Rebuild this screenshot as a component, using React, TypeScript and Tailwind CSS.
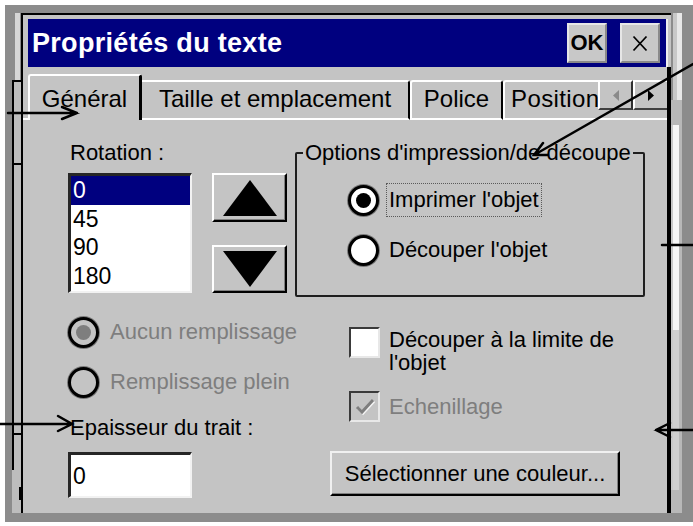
import React from "react";

function RaisedTri({ dir }: { dir: "up" | "down" }) {
  return (
    <svg width="54" height="36" viewBox="0 0 54 36">
      {dir === "up" ? (
        <polygon points="27,0 54,36 0,36" fill="#000" />
      ) : (
        <polygon points="0,0 54,0 27,36" fill="#000" />
      )}
    </svg>
  );
}

function Radio({ checked, disabled }: { checked?: boolean; disabled?: boolean }) {
  return (
    <div
      className={
        "flex h-[31px] w-[31px] shrink-0 items-center justify-center rounded-full border-[3px] border-black shadow-[0_0_0_1px_#7a7a7a] " +
        (disabled ? "bg-[#c4c4c4]" : "bg-white")
      }
    >
      {checked && (
        <div
          className={
            "h-[15px] w-[15px] rounded-full " + (disabled ? "bg-[#7e7e7e]" : "bg-black")
          }
        />
      )}
    </div>
  );
}

export default function App() {
  return (
    <div className="relative h-[526px] w-[693px] overflow-hidden bg-white pl-[5px] pt-[5px] font-['Liberation_Sans',Arial,sans-serif] text-black">
      <div className="flex h-[517px] w-[688px] bg-[#8c8c8c] pb-[9px] pt-[8px]">
        {/* left background strip */}
        <div className="flex w-[16px] flex-col pl-[7px]">
          <div className="flex h-[67px] pl-[3px]">
            <div className="w-[5px] bg-[#d6d6d6]" />
          </div>
          <div className="flex flex-1 flex-col bg-[#bdbdbd]">
            <div className="h-[83px] border-l-2 border-t-2 border-black" />
            <div className="h-[270px] border-l-2 border-t-2 border-black" />
            <div className="h-[37px] border-l-2 border-t-2 border-black" />
            <div className="flex flex-1 justify-end">
              <div className="mt-[17px] h-[13px] w-[2px] bg-black" />
            </div>
          </div>
        </div>

        {/* dialog */}
        <div className="flex h-[500px] w-[650px] flex-col border-l-2 border-t-2 border-black bg-[#c4c4c4]">
          {/* title row */}
          <div className="flex h-[52px] pl-[5px] pt-[4px]">
            <div className="flex h-[48px] w-[638px] items-center bg-[#00007f] pl-[4px]">
              <span className="whitespace-nowrap text-[27px] font-bold leading-[30px] tracking-[0.3px] text-white">
                Propriétés du texte
              </span>
              <div className="ml-auto mr-[6px] flex gap-[13px]">
                <div className="flex h-[40px] w-[40px] items-center justify-center border-b-2 border-l-2 border-r-2 border-t-2 border-b-[#8a8a8a] border-l-[#e6e6e6] border-r-[#8a8a8a] border-t-[#e6e6e6] bg-[#c8c8c8]">
                  <span className="text-[22px] font-bold leading-none">OK</span>
                </div>
                <div className="flex h-[40px] w-[40px] items-center justify-center border-b-2 border-l-2 border-r-2 border-t-2 border-b-[#8a8a8a] border-l-[#e6e6e6] border-r-[#8a8a8a] border-t-[#e6e6e6] bg-[#c8c8c8]">
                  <svg width="16" height="17" viewBox="0 0 16 17">
                    <path d="M1.5 1.5 L14.5 15.5 M14.5 1.5 L1.5 15.5" stroke="#000" strokeWidth="1.8" />
                  </svg>
                </div>
              </div>
            </div>
            <div className="w-[5px] border-l-2 border-[#eeeeee]" />
          </div>

          {/* body with tabs */}
          <div className="flex flex-1 flex-col border-r-4 border-black">
            {/* tab row */}
            <div className="flex h-[53px] items-end whitespace-nowrap">
              <div className="h-[2px] w-[5px] bg-white" />
              <div className="flex h-[46px] w-[114px] justify-center rounded-t-[3px] border-l-2 border-r-[3px] border-t-2 border-l-white border-r-black border-t-white pt-[11px]">
                <span className="text-[24px] leading-[24px]">Général</span>
              </div>
              <div className="flex h-[40px] w-[268px] justify-center rounded-tr-[3px] border-b-2 border-r-2 border-t-2 border-b-white border-r-black border-t-white pt-[5px]">
                <span className="text-[24px] leading-[24px]">Taille et emplacement</span>
              </div>
              <div className="flex h-[40px] w-[93px] justify-center rounded-tl-[3px] rounded-tr-[3px] border-b-2 border-l-2 border-r-2 border-t-2 border-b-white border-l-white border-r-black border-t-white pt-[5px]">
                <span className="text-[24px] leading-[24px]">Police</span>
              </div>
              <div className="flex h-[40px] w-[95px] overflow-hidden rounded-tl-[3px] border-b-2 border-l-2 border-t-2 border-b-white border-l-white border-t-white pl-[6px] pt-[5px]">
                <span className="text-[24px] leading-[24px] tracking-[0.4px]">Position</span>
              </div>
              <div className="flex h-[40px] w-[69px] flex-col">
                <div className="flex h-[30px]">
                  <div className="flex w-[35px] items-center justify-center border-b-2 border-l-2 border-r-2 border-t-2 border-b-[#404040] border-l-white border-r-[#303030] border-t-white bg-[#c4c4c4]">
                    <svg width="6" height="11" viewBox="0 0 6 11">
                      <polygon points="6,0 6,11 0,5.5" fill="#8a8a8a" />
                    </svg>
                  </div>
                  <div className="flex w-[34px] items-center justify-center border-b-2 border-l-2 border-t-2 border-b-[#404040] border-l-white border-t-white bg-[#c4c4c4]">
                    <svg width="6" height="11" viewBox="0 0 6 11">
                      <polygon points="0,0 0,11 6,5.5" fill="#000" />
                    </svg>
                  </div>
                </div>
                <div className="flex-1 border-b-2 border-white" />
              </div>
            </div>

            {/* page content */}
            <div className="flex flex-1 whitespace-nowrap text-[22px]">
              {/* left column */}
              <div className="flex w-[272px] shrink-0 flex-col pl-[45px]">
                <div className="ml-[2px] mt-[21px] h-[24px] leading-[24px]">Rotation :</div>
                <div className="mt-[8px] flex gap-[20px]">
                  <div className="h-[120px] w-[124px] border-b-2 border-l-[3px] border-r-2 border-t-[3px] border-b-[#f2f2f2] border-l-[#262626] border-r-[#f2f2f2] border-t-[#262626] bg-white text-[23px] leading-[28.5px]">
                    <div className="h-[28.5px] bg-[#00007f] pl-[2px] text-white">0</div>
                    <div className="h-[28.5px] pl-[2px]">45</div>
                    <div className="h-[28.5px] pl-[2px]">90</div>
                    <div className="h-[28.5px] pl-[2px]">180</div>
                  </div>
                  <div className="flex h-[120px] w-[75px] flex-col justify-between">
                    <div className="flex h-[49px] items-center justify-center border-b-2 border-l-2 border-r-2 border-t-2 border-b-black border-l-white border-r-black border-t-white shadow-[inset_-1px_-1px_0_#808080]">
                      <RaisedTri dir="up" />
                    </div>
                    <div className="flex h-[48px] items-center justify-center border-b-2 border-l-2 border-r-2 border-t-2 border-b-black border-l-white border-r-black border-t-white shadow-[inset_-1px_-1px_0_#808080]">
                      <RaisedTri dir="down" />
                    </div>
                  </div>
                </div>
                <div className="mt-[24px] flex h-[30px] items-center gap-[11px] text-[#7e7e7e]">
                  <Radio checked disabled />
                  <span className="leading-[24px]">Aucun remplissage</span>
                </div>
                <div className="mt-[20px] flex h-[30px] items-center gap-[11px] text-[#7e7e7e]">
                  <Radio disabled />
                  <span className="leading-[24px]">Remplissage plein</span>
                </div>
                <div className="ml-[2px] mt-[19px] h-[24px] leading-[24px]">Epaisseur du trait :</div>
                <div className="mt-[12px] flex h-[46px] w-[124px] items-center border-b-2 border-l-[3px] border-r-2 border-t-[3px] border-b-[#f2f2f2] border-l-[#262626] border-r-[#f2f2f2] border-t-[#262626] bg-white pl-[2px] text-[23px] leading-[24px]">
                  0
                </div>
              </div>

              {/* right column */}
              <div className="flex w-[350px] shrink-0 flex-col">
                <fieldset className="mt-[21px] h-[156px] w-[350px] rounded-[2px] border-2 border-[#1e1e1e]">
                  <legend className="ml-[6px] px-[2px] leading-[24px]">Options d'impression/de découpe</legend>
                  <div className="ml-[51px] mt-[18px] flex h-[34px] items-center">
                    <Radio checked />
                    <span className="ml-[7px] flex h-[34px] items-center border border-dotted border-[#5a5a5a] px-[2px] leading-[24px]">
                      Imprimer l'objet
                    </span>
                  </div>
                  <div className="ml-[51px] mt-[16px] flex h-[34px] items-center">
                    <Radio />
                    <span className="ml-[8px] px-[2px] leading-[24px]">Découper l'objet</span>
                  </div>
                </fieldset>

                <div className="ml-[54px] mt-[30px] flex items-start gap-[9px]">
                  <div className="h-[31px] w-[31px] shrink-0 border-b-2 border-l-2 border-r-2 border-t-2 border-b-[#e8e8e8] border-l-[#3a3a3a] border-r-[#e8e8e8] border-t-[#3a3a3a] bg-white" />
                  <span className="mt-[1px] leading-[23px]">
                    Découper à la limite de
                    <br />
                    l'objet
                  </span>
                </div>
                <div className="ml-[54px] mt-[17px] flex items-center gap-[9px] text-[#7e7e7e]">
                  <div className="flex h-[31px] w-[31px] shrink-0 items-center justify-center border-b-2 border-l-2 border-r-2 border-t-2 border-b-[#e8e8e8] border-l-[#3a3a3a] border-r-[#e8e8e8] border-t-[#3a3a3a] bg-[#c4c4c4]">
                    <svg width="20" height="18" viewBox="0 0 20 18">
                      <path d="M2 9 L7 14 L18 2" fill="none" stroke="#f4f4f4" strokeWidth="3" transform="translate(1 1)" />
                      <path d="M2 9 L7 14 L18 2" fill="none" stroke="#7e7e7e" strokeWidth="3" />
                    </svg>
                  </div>
                  <span className="leading-[24px]">Echenillage</span>
                </div>
                <div className="ml-[35px] mt-[29px] flex h-[45px] w-[290px] items-center justify-center border-b-2 border-l-2 border-r-2 border-t-2 border-b-black border-l-[#f0f0f0] border-r-black border-t-[#f0f0f0] shadow-[inset_-1px_-1px_0_#808080]">
                  <span className="leading-[24px]">Sélectionner une couleur...</span>
                </div>
              </div>
            </div>
          </div>
        </div>

        {/* right background strip */}
        <div className="flex w-[22px] flex-col">
          <div className="flex h-[87px] pl-[2px]">
            <div className="w-[4px] bg-[#c8c8c8]" />
            <div className="w-[5px] bg-[#e8e8e8]" />
          </div>
          <div className="h-[25px] w-[11px] bg-[#b8b8b8]" />
          <div className="flex h-[205px]">
            <div className="w-[2px] bg-[#c8c8c8]" />
            <div className="w-[6px] bg-[#f6f6f6]" />
            <div className="w-[3px] bg-[#b8b8b8]" />
          </div>
          <div className="flex h-[160px]">
            <div className="w-[2px] bg-[#c8c8c8]" />
            <div className="w-[6px] bg-[#cfcfcf]" />
            <div className="w-[3px] bg-[#b8b8b8]" />
          </div>
          <div className="w-[11px] flex-1 bg-[#b8b8b8]" />
        </div>
      </div>

      {/* annotation arrows */}
      <svg className="pointer-events-none absolute left-0 top-0" width="693" height="526" viewBox="0 0 693 526">
        <g stroke="#000" strokeWidth="2.5" fill="none" strokeLinecap="round">
          <path d="M8 113 L77 113 M62 107 L77 113 L62 119" />
          <path d="M693 64 L534 155 M543 143 L534 155 L548 155" />
          <path d="M662 245 L693 245" />
          <path d="M0 424 L72 424 M58 416 L72 424 L58 431" />
          <path d="M693 430 L656 430 M670 423 L656 430 L670 437" />
        </g>
      </svg>
    </div>
  );
}
